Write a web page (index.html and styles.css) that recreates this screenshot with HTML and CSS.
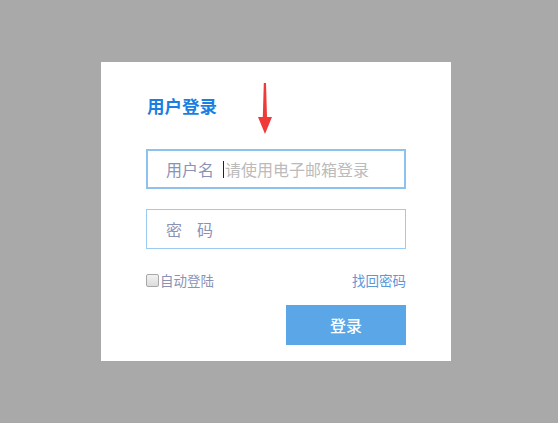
FILE: index.html
```html
<!DOCTYPE html>
<html lang="zh-CN">
<head>
<meta charset="utf-8">
<title>用户登录</title>
<link rel="stylesheet" href="styles.css">
</head>
<body>
<div class="page">
  <div class="card">
    <h1 class="title">用户登录</h1>
    <svg class="arrow" width="16" height="52" viewBox="0 0 16 52">
      <path d="M6.8 0 L9 0 L10 34 L15 34 L8 51 L1 34 L5.8 34 Z" fill="#f03a3a"/>
    </svg>
    <div class="field field-active">
      <span class="label">用户名</span>
      <span class="caret"></span>
      <span class="placeholder">请使用电子邮箱登录</span>
    </div>
    <div class="field field-pass">
      <span class="label label-spaced">密码</span>
    </div>
    <div class="options">
      <label class="remember"><span class="check"></span>自动登陆</label>
      <a class="forgot">找回密码</a>
    </div>
    <div class="actions">
      <button class="submit">登录</button>
    </div>
  </div>
</div>
</body>
</html>
```
FILE: styles.css
```css
html, body {
  margin: 0;
  padding: 0;
}
body {
  background: #a9a9a9;
  font-family: "Noto Sans CJK SC", "Noto Sans", sans-serif;
}
.page {
  height: 423px;
  padding: 62px 0 0 101px;
  box-sizing: border-box;
}
.card {
  position: relative;
  width: 350px;
  height: 299px;
  background: #fff;
  padding: 32px 45px 0 45px;
  box-sizing: border-box;
}
.title {
  margin: 0 0 31px 1px;
  font-size: 17.5px;
  line-height: 24px;
  font-weight: bold;
  color: #1a7fe0;
}
.arrow {
  position: absolute;
  left: 156px;
  top: 21px;
}
.field {
  display: flex;
  align-items: center;
  height: 40px;
  box-sizing: border-box;
  border: 1px solid #9ccbf1;
  padding-left: 19px;
  font-size: 16px;
}
.field-active {
  border: 2px solid #8dc2ee;
  padding-left: 18px;
}
.field-pass {
  margin-top: 20px;
}
.label {
  color: #8a93b6;
  line-height: 20px;
}
.label-spaced {
  letter-spacing: 15px;
}
.caret {
  width: 1px;
  height: 17px;
  background: #222;
  margin-left: 9px;
  margin-right: 1px;
}
.placeholder {
  color: #bbbbbb;
  line-height: 20px;
}
.options {
  display: flex;
  justify-content: space-between;
  align-items: center;
  margin-top: 21px;
  height: 20px;
  font-size: 13.5px;
}
.remember {
  display: flex;
  align-items: center;
  color: #8a93b6;
}
.check {
  width: 11px;
  height: 11px;
  border: 1px solid #a8a8a8;
  border-radius: 2px;
  background: linear-gradient(#f2f2f2, #dcdcdc);
  margin-right: 1px;
}
.forgot {
  color: #5d97d8;
  cursor: pointer;
}
.actions {
  display: flex;
  justify-content: flex-end;
  margin-top: 15px;
}
.submit {
  width: 120px;
  height: 40px;
  border: none;
  background: #5ba6e6;
  color: #fff;
  font-family: inherit;
  font-size: 16px;
  font-weight: 500;
  padding: 0;
}
```
